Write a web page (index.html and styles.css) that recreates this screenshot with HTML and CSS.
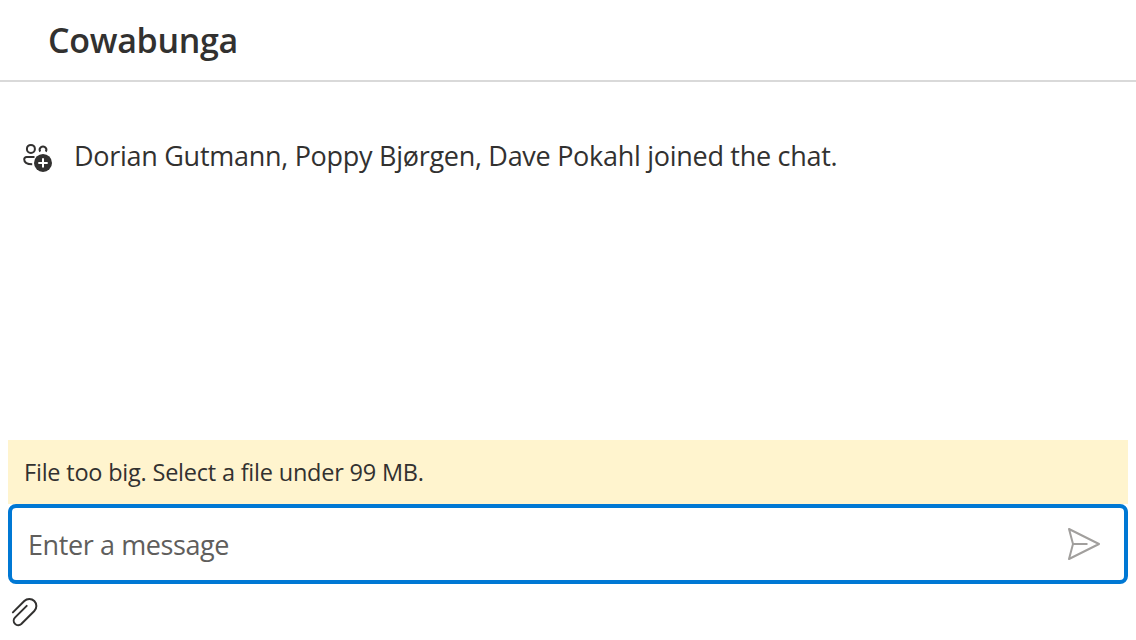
FILE: index.html
```html
<!DOCTYPE html>
<html lang="en">
<head><meta charset="utf-8"><title>Cowabunga</title><link rel="stylesheet" href="styles.css"></head>
<body>
<header class="header"><h1 class="title">Cowabunga</h1></header>
<main class="thread"><div class="notice">
<svg class="people" viewBox="0 0 32 32" width="32" height="32" fill="none" stroke="#323130" stroke-width="2"><circle cx="8.900" cy="8.900" r="4"/><path d="M18.200 11.600a3.300 3.300 0 1 1 5.600 0"/><path d="M12.500 17H4.500a2.300 2.300 0 0 0-2.300 2.300c0 3.200 3.200 5 8 5"/><circle cx="21" cy="22.900" r="9" fill="#323130" stroke="none"/><path d="M21 18.200v9.400M16.300 22.900h9.400" stroke="#fff"/></svg>
<p class="notice-text">Dorian Gutmann, Poppy Bjørgen, Dave Pokahl joined the chat.</p></div></main>
<footer class="composer">
<div class="warning">File too big. Select a file under 99 MB.</div>
<div class="field"><span class="placeholder">Enter a message</span>
<svg class="send" width="34" height="34" viewBox="0 0 34 34" fill="none" stroke="#a19f9d" stroke-width="2" stroke-linejoin="round"><path d="M2 2L32 17 2 32 6 17zM6 17H20.500"/></svg></div>
<svg class="clip" width="28" height="32" viewBox="0 0 28 32" fill="none" stroke="#323130" stroke-width="2" stroke-linecap="round"><path d="M2.900 16.400L14.300 5a7.070 7.070 0 0 1 10 10L11.300 28a4.530 4.530 0 0 1-6.400-6.400L16.700 9.900"/></svg>
</footer>
</body></html>
```
FILE: styles.css
```css
* { box-sizing: border-box; }
body { margin: 0; height: 640px; display: flex; flex-direction: column; background: #fff; color: #323130; font-family: "Open Sans", "Noto Sans", sans-serif; overflow: hidden; }
.header { height: 82px; border-bottom: 2px solid #d9d9d9; padding: 0 48px; display: flex; align-items: center; }
.title { margin: 0; font-size: 34px; line-height: 48px; font-weight: 600; letter-spacing: -0.3px; }
.thread { flex: 1; padding: 54px 22px; }
.notice { display: flex; align-items: center; gap: 20px; }
.notice-text { margin: 0; font-size: 27px; line-height: 40px; white-space: nowrap; letter-spacing: -0.285px; }
.composer { height: 200px; padding: 0 8px; }
.warning { height: 64px; padding: 0 16px; background: #fff4ce; font-size: 23.5px; line-height: 64px; letter-spacing: -0.21px; }
.field { height: 80px; border: 4px solid #0078d4; border-radius: 8px; padding: 0 23px 0 16px; display: flex; align-items: center; justify-content: space-between; }
.placeholder { color: #605e5c; font-size: 27px; letter-spacing: -0.4px; }
.clip { display: block; margin: 12px 0 0 2px; }
```
